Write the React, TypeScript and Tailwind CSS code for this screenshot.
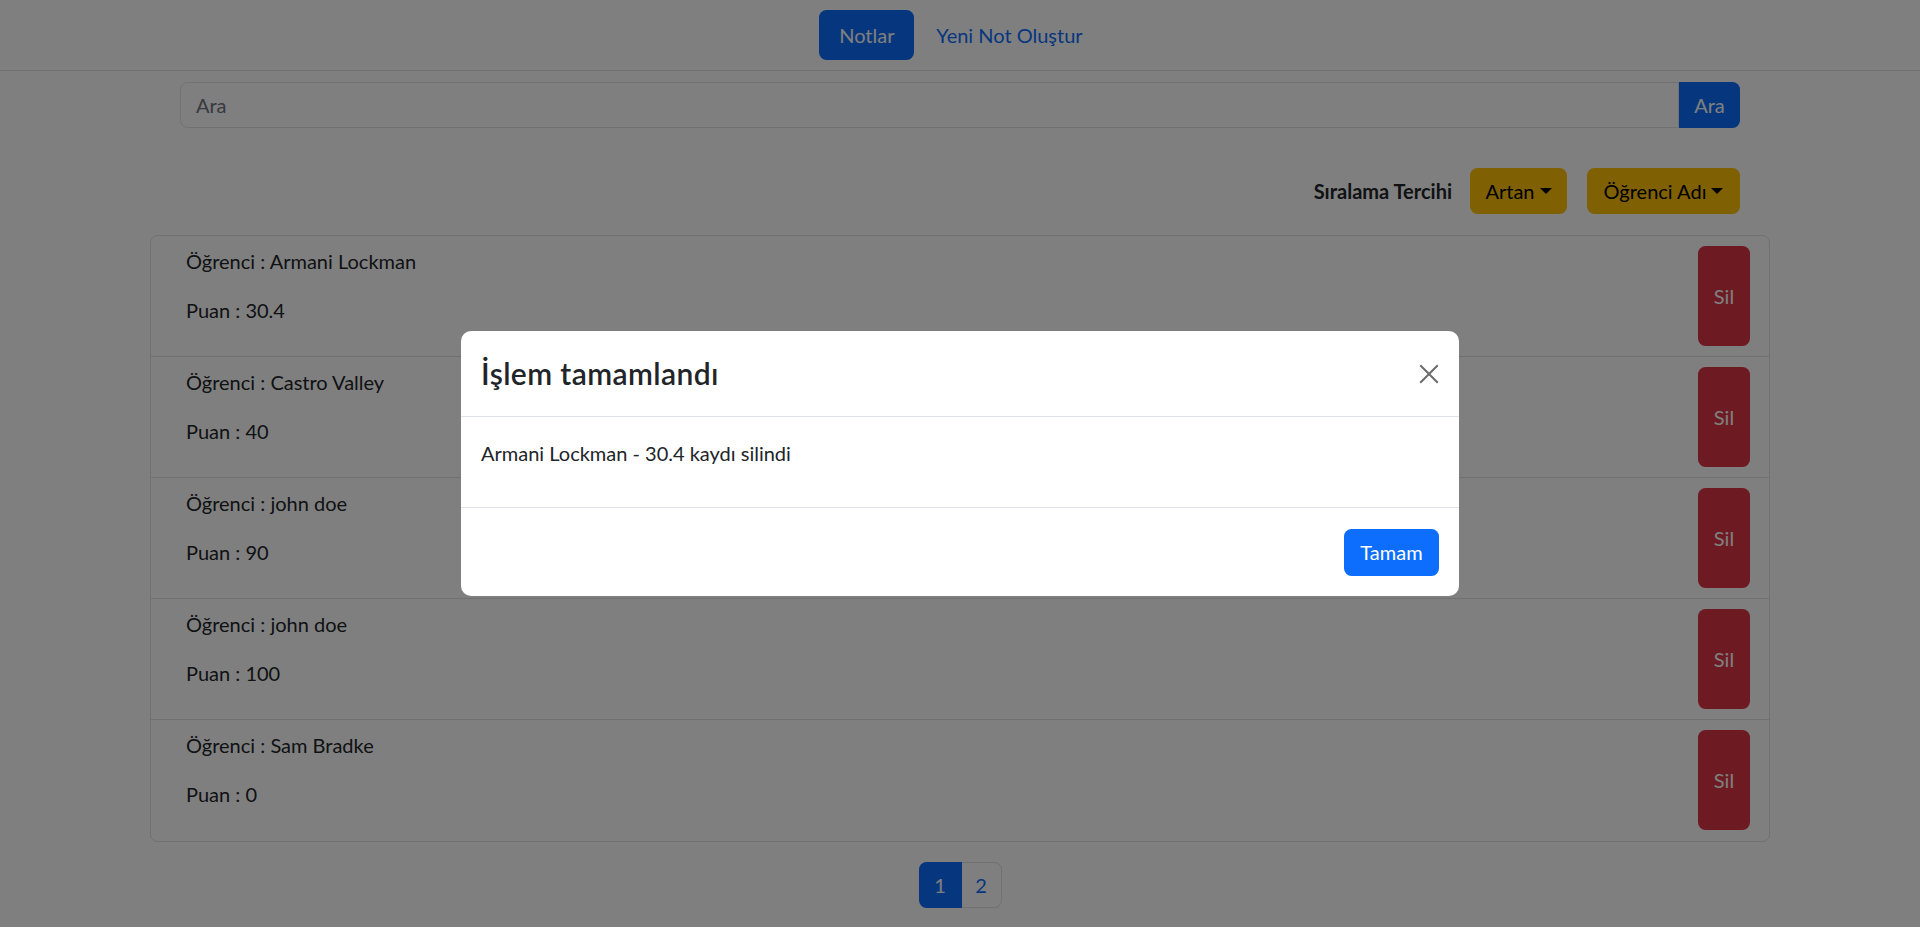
import { useState } from "react";

interface Not {
  id: number;
  ogrenci: string;
  puan: string;
}

const notlar: Not[] = [
  { id: 1, ogrenci: "Armani Lockman", puan: "30.4" },
  { id: 2, ogrenci: "Castro Valley", puan: "40" },
  { id: 3, ogrenci: "john doe", puan: "90" },
  { id: 4, ogrenci: "john doe", puan: "100" },
  { id: 5, ogrenci: "Sam Bradke", puan: "0" },
];

const Caret = () => (
  <span className="ml-[5px] inline-block h-0 w-0 border-x-[6px] border-t-[6px] border-x-transparent border-t-black align-[3px]" />
);

const App = () => {
  const [acik, setAcik] = useState(true);

  return (
    <div className="min-h-screen bg-white font-['Lato',sans-serif] text-[20px] leading-[30px] text-[#212529]">
      <nav className="flex h-[71px] justify-center border-b border-[#dee2e6] pt-[10px]">
        <div className="flex h-[50px] pl-[4px]">
          <a className="flex w-[95px] items-center justify-center rounded-[7.5px] bg-[#0d6efd] text-white">Notlar</a>
          <a className="flex items-center px-[22px] text-[#0d6efd]">Yeni Not Oluştur</a>
        </div>
      </nav>

      <div className="mx-auto w-[1650px] px-[15px]">
        <div className="mx-[30px] mt-[11px] flex h-[46px]">
          <input
            placeholder="Ara"
            className="flex-1 rounded-l-[7.5px] border border-[#dee2e6] px-[15px] text-[20px] outline-none placeholder:text-[#6c757d]"
          />
          <button className="w-[61px] rounded-r-[7.5px] bg-[#0d6efd] text-white">Ara</button>
        </div>

        <div className="mr-[30px] mt-[40px] flex items-center justify-end">
          <span className="mr-[18px] font-bold">Sıralama Tercihi</span>
          <button className="flex h-[46px] w-[97px] items-center justify-center rounded-[7.5px] bg-[#ffc107] text-black">
            Artan
            <Caret />
          </button>
          <button className="ml-[20px] flex h-[46px] w-[153px] items-center justify-center rounded-[7.5px] bg-[#ffc107] text-black">
            Öğrenci Adı
            <Caret />
          </button>
        </div>

        <div className="mt-[21px] rounded-[7.5px] border border-[#dee2e6]">
          {notlar.map((not, i) => (
            <div
              key={not.id}
              className={
                "flex h-[121px] items-start justify-between pl-[35px] pr-[19px] pt-[10px] " +
                (i < notlar.length - 1 ? "border-b border-[#dee2e6]" : "h-[120px]")
              }
            >
              <div>
                <p className="mb-[19px]">Öğrenci : {not.ogrenci}</p>
                <p>Puan : {not.puan}</p>
              </div>
              <button className="flex h-[100px] w-[52px] items-center justify-center rounded-[7.5px] bg-[#dc3545] text-white">
                Sil
              </button>
            </div>
          ))}
        </div>

        <div className="mt-[20px] flex justify-center">
          <a className="flex h-[46px] w-[43px] items-center justify-center rounded-l-[7.5px] bg-[#0d6efd] text-white">1</a>
          <a className="flex h-[46px] w-[40px] items-center justify-center rounded-r-[7.5px] border border-l-0 border-[#dee2e6] text-[#0d6efd]">2</a>
        </div>
      </div>

      {acik && (
        <div className="fixed inset-0 flex items-center justify-center bg-black/50">
          <div className="w-[998px] rounded-[10px] bg-white">
            <div className="flex h-[86px] items-center justify-between border-b border-[#dee2e6] px-[20px]">
              <h4 className="text-[30px] font-semibold leading-[45px] tracking-[0.4px]">İşlem tamamlandı</h4>
              <button onClick={() => setAcik(false)} className="h-[20px] w-[20px]">
                <svg viewBox="0 0 16 16" className="h-[20px] w-[20px]">
                  <path d="M1 1L15 15M15 1L1 15" stroke="#6b6b6b" strokeWidth="1.6" />
                </svg>
              </button>
            </div>
            <div className="h-[91px] border-b border-[#dee2e6] px-[20px] pt-[21px]">
              <p>Armani Lockman - 30.4 kaydı silindi</p>
            </div>
            <div className="flex h-[88px] items-center justify-end px-[20px]">
              <button
                onClick={() => setAcik(false)}
                className="flex h-[47px] w-[95px] items-center justify-center rounded-[7.5px] bg-[#0d6efd] text-white"
              >
                Tamam
              </button>
            </div>
          </div>
        </div>
      )}
    </div>
  );
};

export default App;
